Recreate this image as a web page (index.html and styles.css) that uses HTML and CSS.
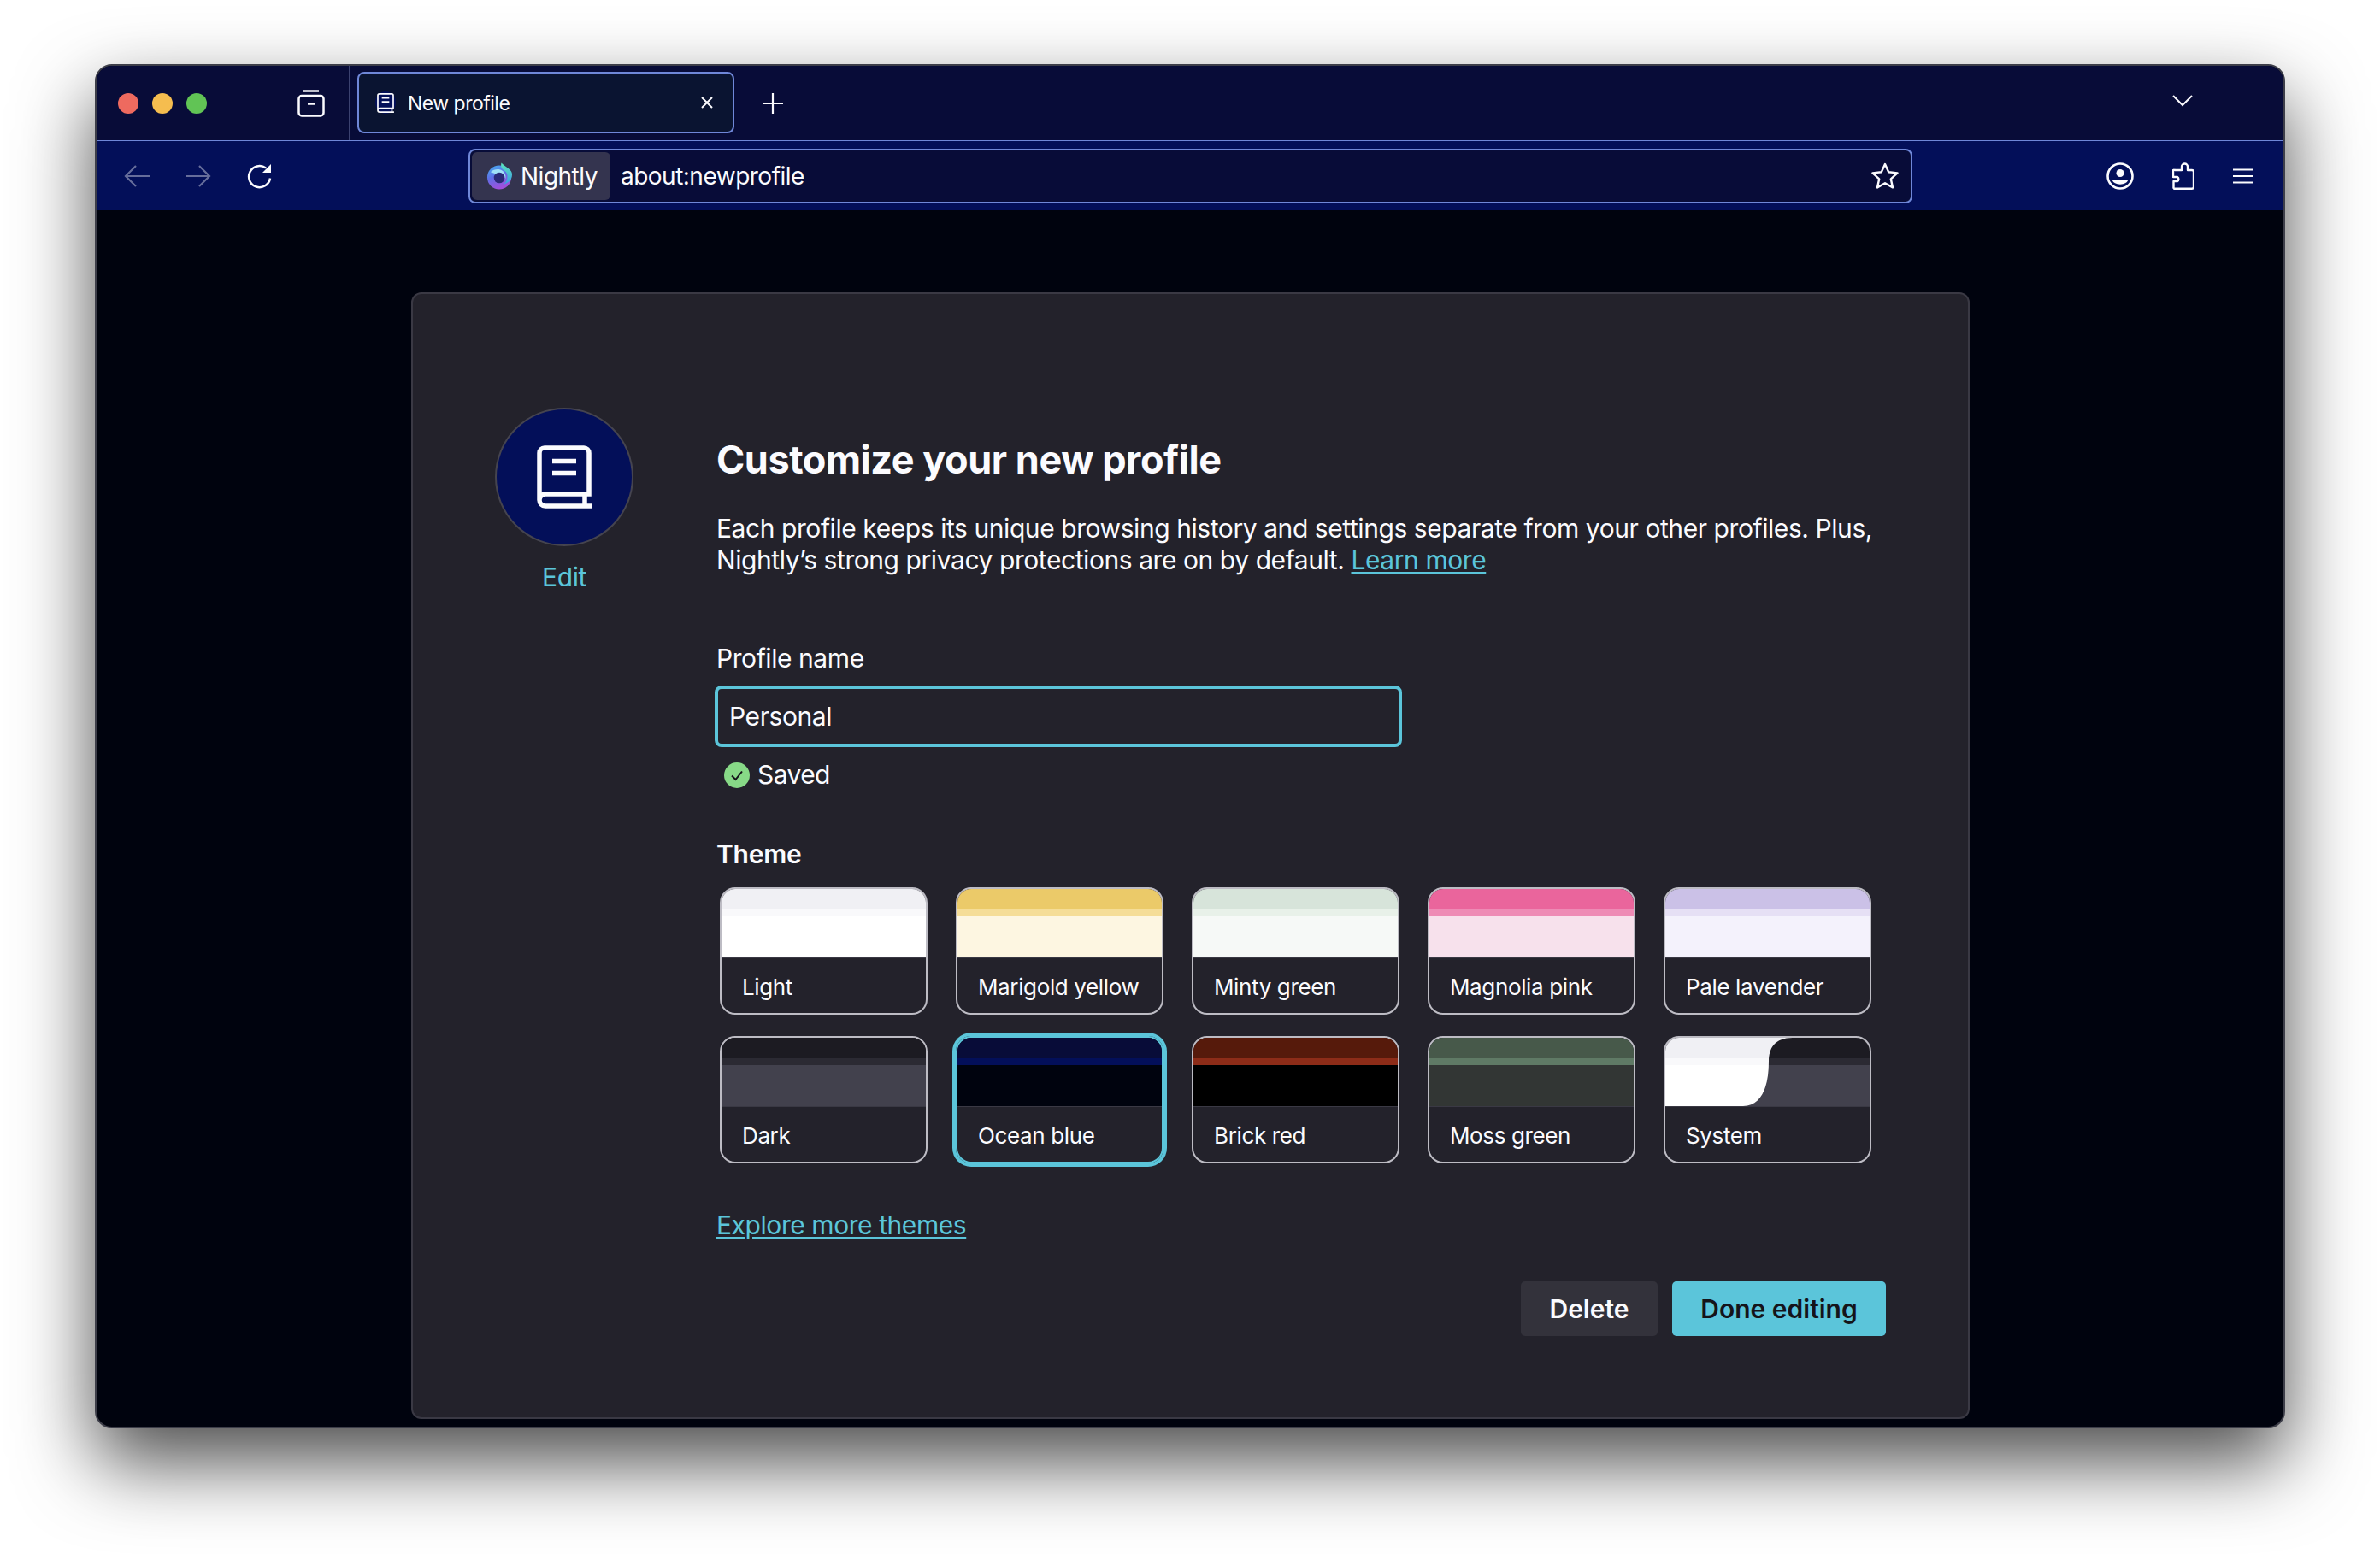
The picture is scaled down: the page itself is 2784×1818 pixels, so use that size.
FILE: index.html
```html
<!DOCTYPE html>
<html lang="en">
<head>
  <meta charset="UTF-8">
  <title>New profile</title>
  <link rel="stylesheet" href="styles.css">
</head>
<body>
  <svg class="defs" width="0" height="0">
    <symbol id="book" viewBox="0 0 64 74">
      <path d="M3 64V9a6 6 0 0 1 6-6h46a6 6 0 0 1 6 6v48H10a7 7 0 0 0 0 14h54M56 57v14" fill="none" stroke="currentColor" stroke-width="5.5"/>
      <path d="M18 18.500h28M18 32.500h28" fill="none" stroke="currentColor" stroke-width="5.500"/>
    </symbol>
    <linearGradient id="nightly-globe" x1="0" y1="0" x2="0.4" y2="1">
      <stop offset="0" stop-color="#45b4f2"/>
      <stop offset="0.5" stop-color="#5f6fe6"/>
      <stop offset="1" stop-color="#a04fdc"/>
    </linearGradient>
    <linearGradient id="nightly-flame" x1="0" y1="0" x2="0" y2="1">
      <stop offset="0" stop-color="#5ce6bc"/>
      <stop offset="1" stop-color="#3a9be6"/>
    </linearGradient>
  </svg>

  <div class="window">
    <div class="tabbar">
      <div class="traffic">
        <span class="light red"></span>
        <span class="light yellow"></span>
        <span class="light green"></span>
      </div>
      <svg class="view-icon" viewBox="0 0 32 32" fill="none" stroke="#fbfbfe" stroke-width="2.500">
        <path d="M7 1.500h18"/>
        <rect x="1.500" y="7" width="29" height="23.500" rx="3.500"/>
        <path d="M12 16.500h8"/>
      </svg>
      <div class="tab-strip">
        <div class="tab">
          <span class="tab-avatar"><svg class="tab-book"><use href="#book"/></svg></span>
          <span class="tab-title">New profile</span>
          <svg class="tab-close" viewBox="0 0 16 16" fill="none" stroke="#fbfbfe" stroke-width="2">
            <path d="M2 2l12 12M14 2 2 14"/>
          </svg>
        </div>
        <svg class="new-tab" viewBox="0 0 26 26" fill="none" stroke="#fbfbfe" stroke-width="2.200">
          <path d="M13 1v24M1 13h24"/>
        </svg>
      </div>
      <svg class="tabs-menu" viewBox="0 0 24 14" fill="none" stroke="#fbfbfe" stroke-width="2">
        <path d="M1 1l11 11L23 1"/>
      </svg>
    </div>

    <div class="toolbar">
      <div class="nav">
        <svg class="nav-icon dim" viewBox="0 0 30 30" fill="none" stroke="#fbfbfe" stroke-width="2.200">
          <path d="M30 15H2M14 3 2 15l12 12"/>
        </svg>
        <svg class="nav-icon dim" viewBox="0 0 30 30" fill="none" stroke="#fbfbfe" stroke-width="2.200">
          <path d="M0 15h28M16 3l12 12-12 12"/>
        </svg>
        <svg class="nav-icon" viewBox="0 0 30 30" fill="none" stroke="#fbfbfe" stroke-width="2.500">
          <path d="M27 17.500A12.500 12.500 0 1 1 22 5.500"/>
          <path d="M28 1v10H18z" fill="#fbfbfe" stroke="none"/>
        </svg>
      </div>
      <div class="urlbar">
        <div class="identity">
          <svg class="nightly-logo" viewBox="0 0 32 32">
            <circle cx="15.500" cy="17.500" r="14.500" fill="url(#nightly-globe)"/>
            <path d="M18 0c-1 4 0 7 3 9 4 2 5 6 4 10-1 4-3 6-5 7 6-1 11-5 11-12C31 8 24 6 18 0z" fill="url(#nightly-flame)"/>
            <path d="M5 11c3-3 8-4 11-3 5 1 8 6 7 11l-3-4c-2-2-5-2-7-1l-2 3-1-4z" fill="#9fe0f7"/>
            <circle cx="15.500" cy="18" r="6.500" fill="#2b2a78"/>
          </svg>
          <span>Nightly</span>
        </div>
        <span class="url-text">about:newprofile</span>
        <svg class="star" viewBox="0 0 32 32" fill="none" stroke="#fbfbfe" stroke-width="2.400" stroke-linejoin="round">
          <path d="M16 2l4.200 9.300 10.300 1.100-7.700 6.900 2.200 10.100L16 24.300l-9 5.100 2.200-10.100-7.700-6.900 10.300-1.100z"/>
        </svg>
      </div>
      <div class="actions">
        <svg class="account" viewBox="0 0 32 32">
          <circle cx="16" cy="16" r="14.500" fill="none" stroke="#fbfbfe" stroke-width="2.600"/>
          <circle cx="16" cy="12.500" r="4.500" fill="#fbfbfe"/>
          <path d="M6.500 20.500h19a10 7.500 0 0 1-19 0z" fill="#fbfbfe"/>
        </svg>
        <svg class="puzzle" viewBox="0 0 26 32" fill="none" stroke="#fbfbfe" stroke-width="2.400" stroke-linejoin="round">
          <path d="M2 30.800h21a2 2 0 0 0 2-2V11a2 2 0 0 0-2-2h-5V5a3.500 3.500 0 0 0-7 0v4H3a2 2 0 0 0-2 0v8h5a3 3 0 0 1 0 5H1.500v7a2 2 0 0 0 .5 1.800z"/>
        </svg>
        <svg class="menu" viewBox="0 0 24 18" fill="none" stroke="#fbfbfe" stroke-width="2.200">
          <path d="M0 1.500h24M0 9h24M0 16.500h24"/>
        </svg>
      </div>
    </div>

    <div class="content">
      <div class="card">
        <div class="avatar-col">
          <div class="avatar"><svg class="avatar-book"><use href="#book"/></svg></div>
          <a class="link edit">Edit</a>
        </div>
        <div class="main-col">
          <h1>Customize your new profile</h1>
          <p class="intro">Each profile keeps its unique browsing history and settings separate from your other profiles. Plus,<br>Nightly’s strong privacy protections are on by default. <a class="link underline">Learn more</a></p>

          <label class="field-label" for="profile-name">Profile name</label>
          <input id="profile-name" class="name-input" value="Personal">
          <div class="saved">
            <svg class="saved-icon" viewBox="0 0 30 30">
              <circle cx="15" cy="15" r="15" fill="#87d987"/>
              <path d="M9 15.500l4.500 4.500L21 10.500" fill="none" stroke="#15141a" stroke-width="2"/>
            </svg>
            <span>Saved</span>
          </div>

          <h2>Theme</h2>
          <div class="themes">
            <div class="theme t-light"><div class="preview"><i></i><i></i><i></i></div><span>Light</span></div>
            <div class="theme t-marigold"><div class="preview"><i></i><i></i><i></i></div><span>Marigold yellow</span></div>
            <div class="theme t-minty"><div class="preview"><i></i><i></i><i></i></div><span>Minty green</span></div>
            <div class="theme t-magnolia"><div class="preview"><i></i><i></i><i></i></div><span>Magnolia pink</span></div>
            <div class="theme t-lavender"><div class="preview"><i></i><i></i><i></i></div><span>Pale lavender</span></div>
            <div class="theme t-dark"><div class="preview"><i></i><i></i><i></i></div><span>Dark</span></div>
            <div class="theme t-ocean selected"><div class="preview"><i></i><i></i><i></i></div><span>Ocean blue</span></div>
            <div class="theme t-brick"><div class="preview"><i></i><i></i><i></i></div><span>Brick red</span></div>
            <div class="theme t-moss"><div class="preview"><i></i><i></i><i></i></div><span>Moss green</span></div>
            <div class="theme t-system">
              <div class="preview">
                <svg class="system-art" viewBox="0 0 239 80" preserveAspectRatio="none">
                  <rect width="239" height="24" fill="#f0f0f4"/>
                  <rect y="24" width="239" height="8" fill="#f9f9fb"/>
                  <rect y="32" width="239" height="48" fill="#ffffff"/>
                  <clipPath id="system-dark"><path d="M149 0C128 0 121 12 121 28C121 58 112 80 91 80H239V0Z"/></clipPath>
                  <g clip-path="url(#system-dark)">
                    <rect width="239" height="24" fill="#1c1b22"/>
                    <rect y="24" width="239" height="8" fill="#2b2a33"/>
                    <rect y="32" width="239" height="48" fill="#42414d"/>
                  </g>
                </svg>
              </div>
              <span>System</span>
            </div>
          </div>

          <a class="link underline explore">Explore more themes</a>

          <div class="buttons">
            <button class="btn btn-delete">Delete</button>
            <button class="btn btn-done">Done editing</button>
          </div>
        </div>
      </div>
    </div>
  </div>
</body>
</html>
```

FILE: styles.css
```css
* { box-sizing: border-box; }
html, body {
  margin: 0;
  height: 1818px;
  overflow: hidden;
  background: #fff;
}
body {
  font-family: Inter, "Noto Sans", sans-serif;
  color: #fbfbfe;
  padding: 75px 111px 0;
}
.defs { position: absolute; }

.window {
  width: 2562px;
  height: 1596px;
  border: 2px solid #3d3e49;
  border-radius: 20px;
  overflow: hidden;
  background: #00030e;
  box-shadow: 0 40px 90px rgba(0,0,0,0.7);
}

/* tab bar */
.tabbar {
  display: flex;
  align-items: center;
  height: 88px;
  background: #080c38;
  border-bottom: 1px solid #6f87d8;
  padding-right: 106px;
}
.traffic {
  display: flex;
  gap: 16px;
  padding-left: 25px;
}
.light {
  width: 24px;
  height: 24px;
  border-radius: 50%;
}
.red { background: #ee6a5f; }
.yellow { background: #f5bd4f; }
.green { background: #61c455; }
.view-icon {
  width: 32px;
  height: 32px;
  margin-left: 106px;
}
.tab-strip {
  display: flex;
  align-items: center;
  align-self: stretch;
  margin-left: 28px;
  padding-left: 9px;
  border-left: 1px solid #3b4270;
  flex: 1;
}
.tab {
  display: flex;
  align-items: center;
  width: 441px;
  height: 72px;
  margin-top: 7px;
  margin-bottom: 8px;
  padding: 0 22px 0 19px;
  background: #0a1431;
  border: 2px solid #6f87d8;
  border-radius: 8px;
}
.tab-avatar {
  display: flex;
  align-items: center;
  justify-content: center;
  width: 24px;
  height: 26px;
  border-radius: 50%;
  background: #030f59;
}
.tab-book {
  width: 20px;
  height: 23px;
}
.tab-title {
  flex: 1;
  margin-left: 14px;
  padding-top: 2px;
  font-size: 23px;
  letter-spacing: -0.5px;
}
.tab-close {
  width: 16px;
  height: 16px;
}
.new-tab {
  width: 26px;
  height: 26px;
  margin-left: 32px;
}
.tabs-menu {
  width: 24px;
  height: 14px;
  margin-top: -6px;
}

/* toolbar */
.toolbar {
  display: flex;
  align-items: center;
  height: 81px;
  background: #030f59;
  padding: 0 35px 0 32px;
}
.nav {
  display: flex;
  gap: 42px;
}
.nav-icon {
  width: 30px;
  height: 30px;
}
.dim { opacity: 0.4; }
.urlbar {
  display: flex;
  align-items: center;
  width: 1689px;
  height: 64px;
  margin-left: 229px;
  background: #080c38;
  border: 2px solid #6f87d8;
  border-radius: 8px;
  padding: 0 14px 0 2px;
  font-size: 28px;
  letter-spacing: -0.5px;
}
.identity {
  display: flex;
  align-items: center;
  gap: 9px;
  height: 56px;
  padding: 0 15px 0 17px;
  background: #34344f;
  border-radius: 6px;
}
.nightly-logo {
  width: 31px;
  height: 32px;
}
.url-text {
  flex: 1;
  margin-left: 12px;
}
.star {
  width: 32px;
  height: 32px;
}
.actions {
  display: flex;
  align-items: center;
  gap: 45px;
  margin-left: auto;
}
.account { width: 32px; height: 32px; }
.puzzle { width: 26px; height: 32px; }
.menu { width: 24px; height: 18px; }

/* page */
.content {
  padding-top: 96px;
}
.card {
  display: flex;
  gap: 97px;
  width: 1823px;
  height: 1318px;
  margin: 0 0 0 368px;
  padding: 133px 0 0 96px;
  background: #23222b;
  border: 2px solid #3a3944;
  border-radius: 12px;
}
.avatar-col {
  display: flex;
  flex-direction: column;
  align-items: center;
  width: 162px;
}
.avatar {
  display: flex;
  align-items: center;
  justify-content: center;
  width: 162px;
  height: 162px;
  background: #030f59;
  border: 2px solid #45444f;
  border-radius: 50%;
}
.avatar-book {
  width: 64px;
  height: 74px;
}
.link { color: #5bc5da; }
.underline { text-decoration: underline; text-underline-offset: 3px; }
.edit {
  margin-top: 18px;
  font-size: 30px;
  line-height: 37px;
  letter-spacing: -0.43px;
}
.main-col {
  width: 1368px;
  font-size: 30px;
  line-height: 37px;
  letter-spacing: -0.43px;
}
h1 {
  margin: 34px 0 0;
  font-size: 45px;
  line-height: 54px;
  font-weight: 700;
  letter-spacing: -0.45px;
}
.intro {
  margin: 35px 0 0;
  white-space: nowrap;
}
.field-label {
  display: block;
  margin-top: 78px;
}
.name-input {
  display: block;
  width: 804px;
  height: 72px;
  margin: 13px 0 0 -2px;
  padding: 0 13px;
  background: #23222b;
  border: 4px solid #5bc5da;
  border-radius: 8px;
  color: #fbfbfe;
  font: 30px Inter, "Noto Sans", sans-serif;
  letter-spacing: -0.43px;
  outline: none;
}
.saved {
  display: flex;
  align-items: center;
  gap: 9px;
  margin-top: 14px;
  padding-left: 9px;
  letter-spacing: -0.6px;
}
.saved-icon {
  width: 30px;
  height: 30px;
}
h2 {
  margin: 56px 0 0;
  font-size: 30px;
  line-height: 37px;
  font-weight: 600;
  letter-spacing: -0.2px;
}
.themes {
  display: grid;
  grid-template-columns: repeat(5, 243px);
  grid-auto-rows: 149px;
  column-gap: 33px;
  row-gap: 25px;
  margin: 20px 0 0 4px;
}
.theme {
  display: flex;
  flex-direction: column;
  border: 2px solid #bdbcc4;
  border-radius: 18px;
  overflow: hidden;
  font-size: 26px;
  letter-spacing: -0.37px;
}
.theme span {
  padding: 18px 0 0 24px;
  line-height: 32px;
}
.preview {
  display: flex;
  flex-direction: column;
  flex: none;
  height: 81px;
  border-bottom: 1px solid #3a3944;
}
.preview i { display: block; height: 8px; }
.preview i:first-child { height: 24px; }
.preview i:last-child { height: 48px; }
.selected {
  border-color: #5bc5da;
  box-shadow: 0 0 0 4px #5bc5da;
}
.system-art {
  display: block;
  width: 100%;
  height: 80px;
}

.t-light i:nth-child(1) { background: #f0f0f4; }
.t-light i:nth-child(2) { background: #f9f9fb; }
.t-light i:nth-child(3) { background: #ffffff; }
.t-marigold i:nth-child(1) { background: #ebca69; }
.t-marigold i:nth-child(2) { background: #f5dd97; }
.t-marigold i:nth-child(3) { background: #fdf6e1; }
.t-minty i:nth-child(1) { background: #d7e4da; }
.t-minty i:nth-child(2) { background: #e8f1e9; }
.t-minty i:nth-child(3) { background: #f6f9f7; }
.t-magnolia i:nth-child(1) { background: #ea659c; }
.t-magnolia i:nth-child(2) { background: #ee8bb5; }
.t-magnolia i:nth-child(3) { background: #f7e1ec; }
.t-lavender i:nth-child(1) { background: #cbc1e7; }
.t-lavender i:nth-child(2) { background: #e6e0f5; }
.t-lavender i:nth-child(3) { background: #f4f2fc; }
.t-dark i:nth-child(1) { background: #1c1b22; }
.t-dark i:nth-child(2) { background: #2b2a33; }
.t-dark i:nth-child(3) { background: #42414d; }
.t-ocean i:nth-child(1) { background: #080c38; }
.t-ocean i:nth-child(2) { background: #030f59; }
.t-ocean i:nth-child(3) { background: #00030e; }
.t-brick i:nth-child(1) { background: #561a0b; }
.t-brick i:nth-child(2) { background: #8d2c18; }
.t-brick i:nth-child(3) { background: #000000; }
.t-moss i:nth-child(1) { background: #47594a; }
.t-moss i:nth-child(2) { background: #5f7a65; }
.t-moss i:nth-child(3) { background: #323634; }

.explore {
  display: block;
  margin-top: 54px;
}
.buttons {
  display: flex;
  justify-content: flex-end;
  gap: 17px;
  margin-top: 47px;
}
.btn {
  height: 64px;
  border: none;
  border-radius: 5px;
  font: 600 30px Inter, "Noto Sans", sans-serif;
}
.btn-delete {
  width: 160px;
  background: #33323b;
  color: #fbfbfe;
}
.btn-done {
  width: 250px;
  background: #5bc5da;
  color: #15141a;
}
```
